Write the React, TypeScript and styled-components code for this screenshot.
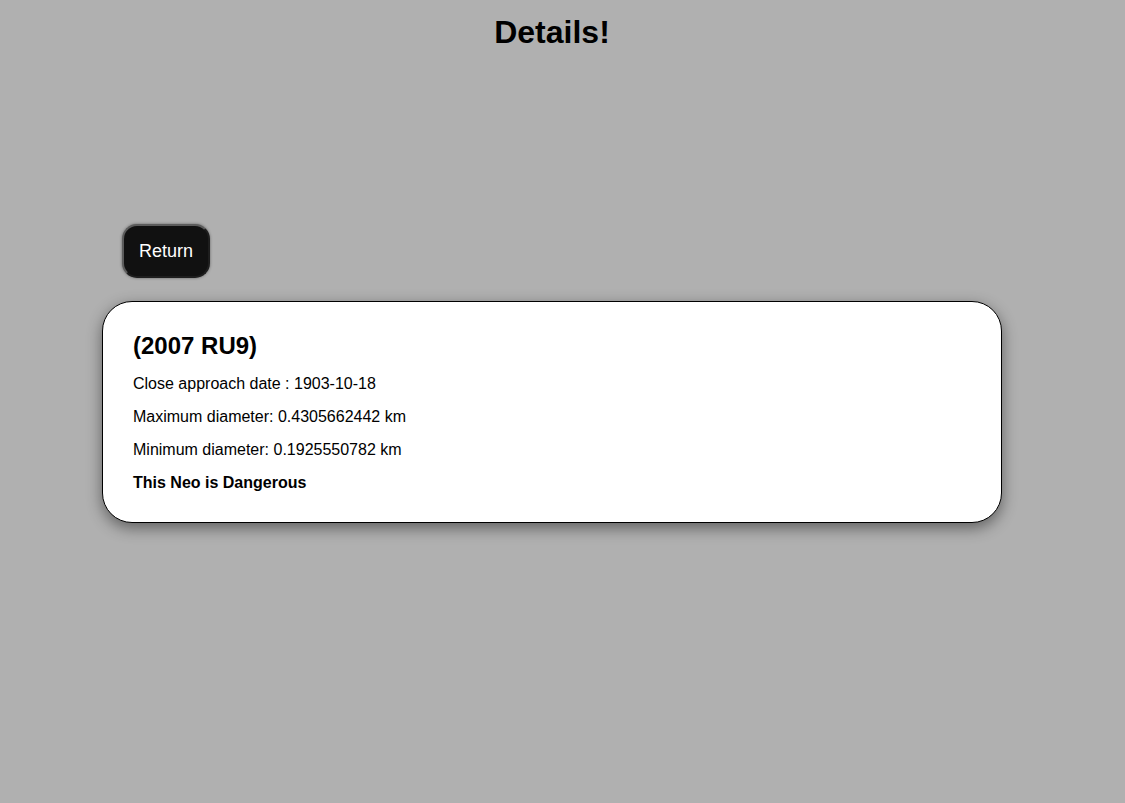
import styled, { createGlobalStyle } from 'styled-components';

const GlobalStyle = createGlobalStyle`
  html, body {
    margin: 0;
    padding: 0;
    background: #b0b0b0;
    font-family: "Liberation Sans", Arial, sans-serif;
    color: #000;
  }
  body {
    min-height: 803px;
  }
`;

const neo = {
  name: '(2007 RU9)',
  closeApproachDate: '1903-10-18',
  maxDiameter: 0.4305662442,
  minDiameter: 0.1925550782,
  hazardous: true,
};

const Page = styled.div`
  display: flex;
  flex-direction: column;
  padding: 14px 123px 40px 102px;
`;

const Title = styled.h1`
  margin: 0;
  font-size: 32px;
  line-height: 37px;
  font-weight: bold;
  text-align: center;
`;

const ReturnButton = styled.button`
  align-self: flex-start;
  margin: 173px 0 0 20px;
  height: 54px;
  padding: 0 15px;
  background: #111111;
  color: #ffffff;
  font-family: "Liberation Sans", Arial, sans-serif;
  font-size: 18px;
  border: 2px solid;
  border-color: #5c5c5c #1e1e1e #1e1e1e #5c5c5c;
  border-radius: 15px;
  box-shadow: 0 0 3px rgba(0, 0, 0, 0.45);
  cursor: pointer;
`;

const Card = styled.section`
  margin-top: 23px;
  width: 900px;
  box-sizing: border-box;
  background: #ffffff;
  border: 1px solid #000;
  border-radius: 30px;
  padding: 30px 30px 30px;
  box-shadow: 0 5px 15px rgba(0, 0, 0, 0.45);
  display: flex;
  flex-direction: column;
  gap: 15px;
`;

const NeoName = styled.h2`
  margin: 0;
  font-size: 24px;
  line-height: 28px;
  font-weight: bold;
`;

const Info = styled.p<{ $strong?: boolean }>`
  margin: 0;
  font-size: 16px;
  line-height: 18px;
  font-weight: ${props => (props.$strong ? 'bold' : 'normal')};
`;

export default function App() {
  return (
    <>
      <GlobalStyle />
      <Page>
        <Title>Details!</Title>
        <ReturnButton>Return</ReturnButton>
        <Card>
          <NeoName>{neo.name}</NeoName>
          <Info>Close approach date : {neo.closeApproachDate}</Info>
          <Info>Maximum diameter: {neo.maxDiameter} km</Info>
          <Info>Minimum diameter: {neo.minDiameter} km</Info>
          <Info $strong>
            {neo.hazardous ? 'This Neo is Dangerous' : 'This Neo is not Dangerous'}
          </Info>
        </Card>
      </Page>
    </>
  );
}
